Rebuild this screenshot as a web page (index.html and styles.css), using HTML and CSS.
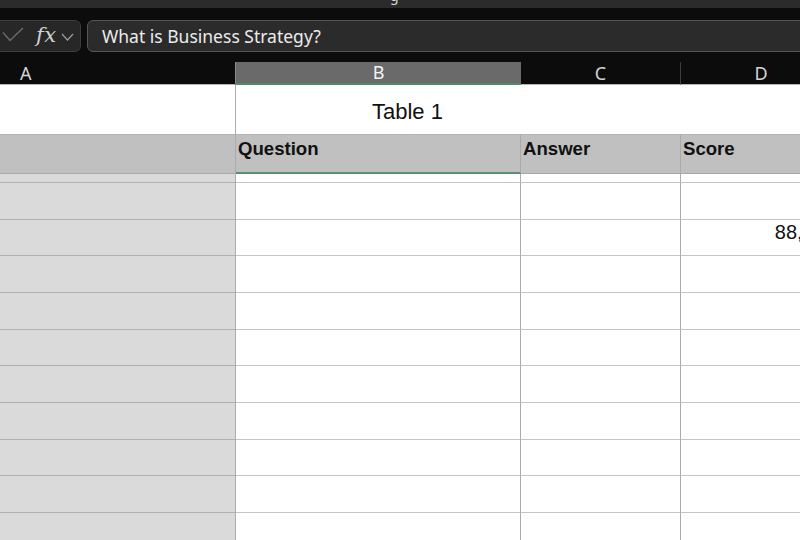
FILE: index.html
```html
<!DOCTYPE html>
<html>
<head>
<meta charset="utf-8">
<link rel="stylesheet" href="styles.css">
</head>
<body>
<div class="app">
  <div class="titlebar"><span class="title">g</span></div>
  <div class="formula-row">
    <div class="namebox">
      <svg class="ico-check" width="22" height="16" viewBox="0 0 22 16"><polyline points="1,5.5 8,13.5 21,1" fill="none" stroke="#6c6c6c" stroke-width="1.3"/></svg>
      <span class="fx">fx</span>
      <svg class="ico-chev" width="13" height="8" viewBox="0 0 13 8"><polyline points="1,1 6.5,7 12,1" fill="none" stroke="#9c9c9c" stroke-width="1.2"/></svg>
    </div>
    <div class="formula">What is Business Strategy?</div>
  </div>
  <div class="colheads">
    <div class="ch ch-a">A</div>
    <div class="ch ch-b">B</div>
    <div class="ch ch-c">C</div>
    <div class="ch ch-d">D</div>
  </div>
  <div class="sheet">
    <div class="row r-title">
      <div class="cell ca white"></div>
      <div class="cell merged">Table 1</div>
    </div>
    <div class="row r-head">
      <div class="cell ca"></div>
      <div class="cell cb">Question</div>
      <div class="cell cc">Answer</div>
      <div class="cell cd">Score</div>
    </div>
    <div class="row r-thin">
      <div class="cell ca"></div><div class="cell cb"></div><div class="cell cc"></div><div class="cell cd"></div>
    </div>
    <div class="row r-std">
      <div class="cell ca"></div><div class="cell cb"></div><div class="cell cc"></div><div class="cell cd"></div>
    </div>
    <div class="row r-std">
      <div class="cell ca"></div><div class="cell cb"></div><div class="cell cc"></div><div class="cell cd num">88,571</div>
    </div>
    <div class="row r-std">
      <div class="cell ca"></div><div class="cell cb"></div><div class="cell cc"></div><div class="cell cd"></div>
    </div>
    <div class="row r-std">
      <div class="cell ca"></div><div class="cell cb"></div><div class="cell cc"></div><div class="cell cd"></div>
    </div>
    <div class="row r-std">
      <div class="cell ca"></div><div class="cell cb"></div><div class="cell cc"></div><div class="cell cd"></div>
    </div>
    <div class="row r-std">
      <div class="cell ca"></div><div class="cell cb"></div><div class="cell cc"></div><div class="cell cd"></div>
    </div>
    <div class="row r-std">
      <div class="cell ca"></div><div class="cell cb"></div><div class="cell cc"></div><div class="cell cd"></div>
    </div>
    <div class="row r-std">
      <div class="cell ca"></div><div class="cell cb"></div><div class="cell cc"></div><div class="cell cd"></div>
    </div>
    <div class="row r-std">
      <div class="cell ca"></div><div class="cell cb"></div><div class="cell cc"></div><div class="cell cd"></div>
    </div>
    <div class="row r-std">
      <div class="cell ca"></div><div class="cell cb"></div><div class="cell cc"></div><div class="cell cd"></div>
    </div>
  </div>
</div>
</body>
</html>
```
FILE: styles.css
```css
* { box-sizing: border-box; }
html, body { margin: 0; padding: 0; }
body {
  width: 800px;
  height: 540px;
  overflow: hidden;
  background: #0c0c0c;
  font-family: "Noto Sans", "Liberation Sans", sans-serif;
}
.app { width: 800px; height: 540px; overflow: hidden; }

.titlebar {
  height: 8px;
  background: #2b2b2b;
  overflow: hidden;
  color: #d8d8d8;
  font-size: 14px;
  line-height: 14px;
}
.title { display: block; padding-left: 390px; margin-top: -11px; }

.formula-row {
  display: flex;
  gap: 6px;
  padding: 12px 0 10px;
  height: 54px;
}
.namebox {
  margin-left: -8px;
  width: 89px;
  height: 32px;
  flex: none;
  display: flex;
  align-items: center;
  padding-left: 9px;
  background: #272727;
  border: 1px solid #3c3c3c;
  border-radius: 6px;
}
.ico-check { display: block; margin-top: -2px; }
.fx {
  margin-left: 12px;
  font-family: "DejaVu Serif", "Liberation Serif", serif;
  font-style: italic;
  font-size: 21px;
  letter-spacing: 0.5px;
  color: #d2d2d2;
  line-height: 30px;
  margin-top: -3px;
}
.ico-chev { display: block; margin-left: 4px; margin-top: 2px; }
.formula {
  flex: 1;
  min-width: 0;
  margin-right: -20px;
  height: 32px;
  display: flex;
  align-items: center;
  padding-left: 14px;
  background: #2b2b2b;
  border: 1px solid #555555;
  border-radius: 6px;
  color: #ececec;
  font-size: 17.5px;
}

.colheads, .row {
  display: grid;
  grid-template-columns: 236px 285px 160px 160px;
  width: 841px;
}
.colheads { height: 23px; }
.ch {
  font-size: 18px;
  line-height: 22px;
  color: #d4d4d4;
  text-align: center;
  border-bottom: 1px solid #b4b4b4;
}
.ch-a { text-align: left; padding-left: 20px; }
.ch-b {
  background: #6a6a6a;
  color: #f4f4f4;
  border-left: 1px solid #8a8a8a;
  margin-left: -1px;
  border-bottom: 2px solid #4e8c69;
  line-height: 21px;
}
.ch-c { border-right: 1px solid #3e3e3e; }

.sheet { width: 800px; overflow: hidden; background: #ffffff; }

.cell {
  font-family: "Liberation Sans", Arial, sans-serif;
  color: #111111;
  border-right: 1px solid #ababab;
  border-bottom: 1px solid #c4c4c4;
  overflow: hidden;
  white-space: nowrap;
}
.ca { background: #dadada; border-bottom-color: #b0b0b0; }
.ca.white { background: #ffffff; }

.r-title { height: 50px; }
.r-title .cell { border-bottom-color: #b4b4b4; }
.merged {
  grid-column: 2 / 5;
  border-right: none;
  padding: 14px 0 0 136px;
  font-size: 22px;
}

.r-head { height: 39px; }
.r-head .cell {
  background: #bfc0bf;
  font-weight: bold;
  font-size: 18.6px;
  padding: 3px 0 0 2px;
  border-bottom-color: #a8a8a8;
}
.r-head .cb { border-bottom: 2px solid #5a8f72; }

.r-thin { height: 9px; }
.r-std { height: 36.667px; }

.num {
  text-align: right;
  font-size: 20px;
  padding: 1px 4px 0 0;
}
```
